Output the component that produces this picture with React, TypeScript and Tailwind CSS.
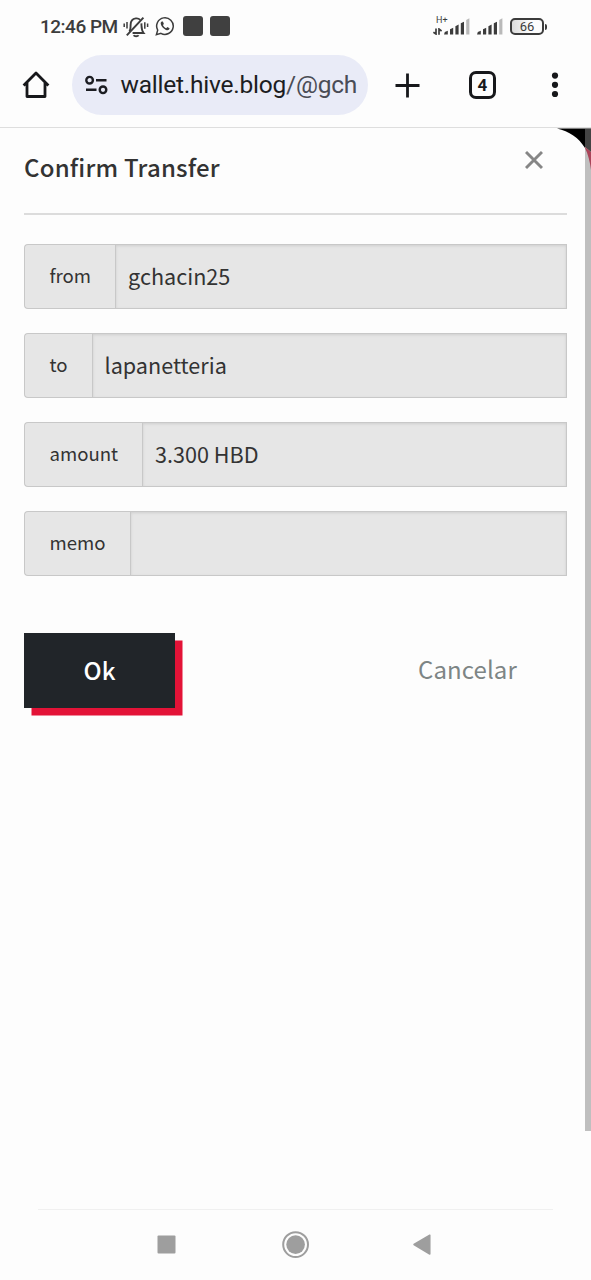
import { useState } from 'react'

interface Field {
  label: string
  value: string
}

const fields: Field[] = [
  { label: 'from', value: 'gchacin25' },
  { label: 'to', value: 'lapanetteria' },
  { label: 'amount', value: '3.300 HBD' },
  { label: 'memo', value: '' }
]

function MutedBell() {
  return (
    <svg width="26" height="22" viewBox="0 0 26 22" fill="none" stroke="#3c3c3c" strokeWidth="1.9">
      <path d="M6.3 15.5C7.6 14.2 7.6 12.5 7.6 9C7.6 5 9.8 2.7 12.8 2.4C14.5 2.2 16.2 2.8 17.2 3.8" />
      <path d="M18.4 7.4C18.6 12 18.3 14.2 20.6 17H9.6" />
      <path d="M10.6 19.2C11.6 20.6 14.6 20.6 15.6 19.2" />
      <path d="M20.4 1.6L3.8 19.4" strokeWidth="2" />
      <path d="M1.2 7.6V11M4 6V12.6M21.8 6.2V12.8M24.6 7.6V11" strokeWidth="1.5" />
    </svg>
  )
}

function WhatsappIcon() {
  return (
    <svg width="20" height="20" viewBox="0 0 20 20" fill="none">
      <path d="M1.4 18.6L2.7 14.1A8.3 8.3 0 1 1 5.9 17.3Z" stroke="#3c3c3c" strokeWidth="1.5" />
      <path
        d="M6.9 5.4C6.2 5.7 5.6 6.4 5.7 7.5C6 10.3 9.3 13.7 12 14.2C13.3 14.4 14.4 13.6 14.6 12.3L12.3 11.1L11.2 12.3C9.8 11.8 8.5 10.5 7.9 9.1L8.9 8L7.9 5.5Z"
        fill="#3c3c3c"
      />
    </svg>
  )
}

function SignalBars() {
  return (
    <svg width="26" height="17" viewBox="0 0 26 17" fill="#3c3c3c">
      <path d="M0 16.5L0.8 14L3.8 12.8V16.5Z" />
      <path d="M6 16.5V11.3L9.2 9.8V16.5Z" />
      <path d="M11.4 16.5V8.2L14.6 6.6V16.5Z" />
      <path d="M16.8 16.5V5.3L20 3.7V16.5Z" />
      <path d="M22.2 16.5V2L25.4 0.3V16.5Z" fill="#b9b9b9" />
    </svg>
  )
}

function StatusBar() {
  return (
    <div className="flex h-[55px] items-start pt-4 pl-10 text-[#3c3c3c]">
      <span className="w-[83px] text-[19px] leading-[22px] font-medium tracking-[-0.5px] whitespace-nowrap">12:46 PM</span>
      <MutedBell />
      <span className="ml-[6px]">
        <WhatsappIcon />
      </span>
      <span className="ml-2 size-5 rounded-[3px] bg-[#404040]" />
      <span className="ml-[7px] size-5 rounded-[3px] bg-[#404040]" />
      <div className="ml-[203px] flex h-[19px] items-end">
        <div className="flex h-[19px] w-[11px] flex-col justify-between">
          <span className="pl-[3px] text-[9px] leading-[9px] whitespace-nowrap">H+</span>
          <svg width="9" height="7" viewBox="0 0 9 7" stroke="#3c3c3c" strokeWidth="1.7" fill="none">
            <path d="M0.4 4.2L3 6V0.4M8.6 3L6 1V6.8" />
          </svg>
        </div>
        <SignalBars />
        <span className="ml-[7px]">
          <SignalBars />
        </span>
      </div>
      <div className="mt-[2px] ml-[7px] flex items-center">
        <div className="flex h-[17px] w-[34px] items-center justify-center rounded-[5px] border-2 border-[#3c3c3c] bg-linear-to-r from-[#dcdcdc] to-[#fdfdfd] to-60% text-[13px] leading-none">
          66
        </div>
        <span className="ml-px h-[6px] w-[2px] rounded-r-sm bg-[#3c3c3c]" />
      </div>
    </div>
  )
}

function BrowserBar() {
  return (
    <div className="flex h-[73px] items-start border-b border-[#dedede]">
      <svg className="mt-[15px] ml-[22px]" width="28" height="29" viewBox="0 0 28 29" fill="none" stroke="#17181b" strokeWidth="2.8">
        <path d="M1.6 15.4L14 3L26.4 15.4M5 12.4V26.5H23V12.4" strokeLinejoin="round" />
      </svg>
      <div className="ml-[22px] flex h-[60px] w-[296px] items-center rounded-full bg-[#e9ebf7] pl-[13px]">
        <svg width="23" height="20" viewBox="0 0 23 20" fill="none" stroke="#1c1d22" strokeWidth="2.4">
          <circle cx="4.6" cy="5.2" r="3.3" />
          <circle cx="18" cy="14.8" r="3.3" />
          <path d="M11 5.2H21.5M1 14.8H11.5" />
        </svg>
        <div className="ml-[12.5px] text-[24.5px] leading-[32px] tracking-[-0.23px] whitespace-nowrap text-[#1c1d22]">
          wallet.hive.blog<span className="text-[#4a4c55]">/@gch</span>
        </div>
      </div>
      <svg className="mt-[18px] ml-[27px]" width="25" height="25" viewBox="0 0 25 25" stroke="#17181b" strokeWidth="2.8">
        <path d="M12.5 0.5V24.5M0.5 12.5H24.5" />
      </svg>
      <div className="mt-4 ml-[49px] flex h-[28px] w-[27px] items-center justify-center rounded-[7px] border-3 border-[#17181b] text-[17px] leading-none font-bold text-[#17181b]">
        4
      </div>
      <svg className="mt-[17px] ml-[55px]" width="8" height="26" viewBox="0 0 8 26" fill="#17181b">
        <circle cx="4" cy="3.6" r="3.1" />
        <circle cx="4" cy="12.8" r="3.1" />
        <circle cx="4" cy="22" r="3.1" />
      </svg>
    </div>
  )
}

function FieldRow({ label, value }: Field) {
  return (
    <div className="flex h-[65px]">
      <span className="flex items-center rounded-l-[4px] border border-r-0 border-[#c8c8c8] bg-[#e6e6e6] pr-[24px] pb-[3px] pl-[24.5px] text-[18.6px] text-[#333333]">
        {label}
      </span>
      <div className="flex flex-1 items-center border border-[#c8c8c8] bg-[#e6e6e6] px-3 pb-px text-[21.6px] text-[#333333] shadow-[inset_0_1px_3px_rgba(10,10,10,0.1)]">
        {value}
      </div>
    </div>
  )
}

function NavigationBar() {
  return (
    <div className="mx-[38px] flex h-[71px] border-t border-[#f0f0f0]">
      <svg className="mt-[21px] ml-[118px]" width="20" height="28" viewBox="0 0 20 28">
        <rect x="1.5" y="4.5" width="18" height="18" rx="1" fill="#9e9e9e" />
      </svg>
      <svg className="mt-[21px] ml-[106px]" width="28" height="28" viewBox="0 0 28 28">
        <circle cx="13.6" cy="13.6" r="12.4" fill="none" stroke="#9e9e9e" strokeWidth="2" />
        <circle cx="13.6" cy="13.6" r="9.3" fill="#9e9e9e" />
      </svg>
      <svg className="mt-[21px] ml-[102px]" width="20" height="28" viewBox="0 0 20 28">
        <path d="M2 13.5L17.8 4.2V23Z" fill="#9e9e9e" stroke="#9e9e9e" strokeWidth="1.5" strokeLinejoin="round" />
      </svg>
    </div>
  )
}

export default function App() {
  const [open, setOpen] = useState(true)

  return (
    <div className="relative flex h-[1280px] w-[591px] flex-col overflow-hidden bg-[#fdfdfd] font-[Roboto,sans-serif]">
      <StatusBar />
      <BrowserBar />

      <div className="flex-1 px-6 font-['Noto_Sans_CJK_SC',sans-serif]">
        {open && (
          <>
            <div className="flex h-[87px] items-start justify-between border-b-2 border-[#dcdcdc]">
              <h3 className="mt-[21px] text-[24px] leading-[36px] font-medium tracking-[0.2px] text-[#333333]">
                Confirm Transfer
              </h3>
              <button className="mt-[23px] mr-[24px]" onClick={() => setOpen(false)}>
                <svg width="18" height="18" viewBox="0 0 18 18" stroke="#868686" strokeWidth="2.9">
                  <path d="M1 1L17 17M17 1L1 17" />
                </svg>
              </button>
            </div>

            <div className="mt-[29px] flex flex-col gap-6">
              {fields.map((field) => (
                <FieldRow key={field.label} {...field} />
              ))}
            </div>

            <div className="mt-[57px] flex items-start">
              <button className="h-[75px] w-[151px] bg-[#212529] pb-px text-[24px] font-medium text-white shadow-[7.5px_7.5px_0_#e31337]">
                Ok
              </button>
              <button className="ml-[243px] h-[75px] pb-[3px] text-[24px] tracking-[0.1px] text-[#7d8585]" onClick={() => setOpen(false)}>
                Cancelar
              </button>
            </div>
          </>
        )}
      </div>

      <NavigationBar />

      {/* rounded page corner and the scrollbar that floats over it */}
      <svg className="absolute top-[128px] right-0" width="36" height="40" viewBox="0 0 36 40">
        <path d="M2 0.5C14 3 24 10 30 20H36V0.5Z" fill="#000000" />
      </svg>
      <div className="absolute top-[128px] right-0 h-[1003px] w-[6px] bg-[#bfbfbf]" />
      <svg className="absolute top-[128px] right-0" width="6" height="44" viewBox="0 0 6 44">
        <path d="M0 0.5H6V24L0 19Z" fill="#444444" />
        <path d="M0 19L6 24V42C5 34 3 26 0 20Z" fill="#aa4459" />
      </svg>
    </div>
  )
}
